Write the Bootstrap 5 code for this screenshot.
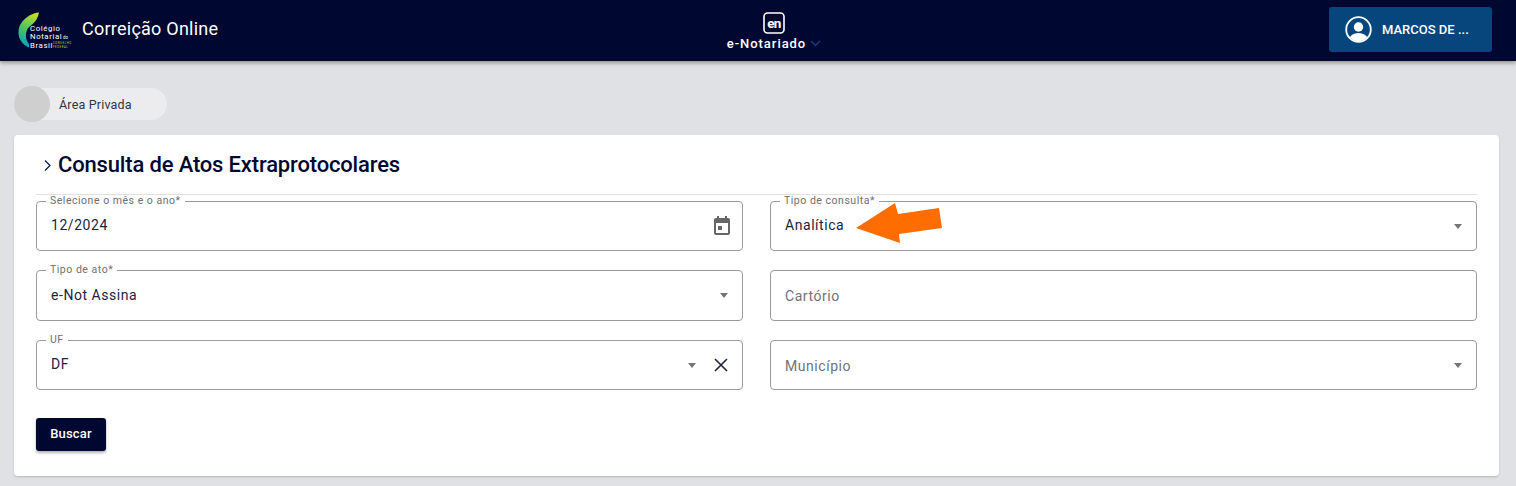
<!DOCTYPE html>
<html lang="pt-BR">
<head>
<meta charset="utf-8">
<title>Consulta de Atos Extraprotocolares</title>
<link href="https://cdn.jsdelivr.net/npm/bootstrap@5.3.0/dist/css/bootstrap.min.css" rel="stylesheet">
<style>
html,body{height:486px;overflow:hidden}
body{background:#e0e1e5;font-family:Roboto,"Liberation Sans",sans-serif;color:#000831}
.topbar{height:61px;background:#000831;box-shadow:0 2px 4px rgba(0,0,0,.35);padding:0 24px 0 18px;position:relative;z-index:2}
.topside{flex:1 1 0;min-width:0}
.logo-mark{width:56px;height:40px;display:block}
.app-name{font-size:18px;color:#fff;margin-left:8px;letter-spacing:.24px;margin-top:-4px}
.center-brand{color:#fff;margin-left:38px;margin-top:2px}
.brand-name{font-size:13px;font-weight:500;letter-spacing:.95px;line-height:16px;margin-top:2px}
.user-btn{width:163px;height:45px;background:#07457d;border-radius:3px;padding-left:16px;color:#fff;font-size:13px;font-weight:500;gap:10px;margin-bottom:2px}
.main-area{padding:25px 17px 0 14px}
.crumb-pill{width:153px;height:32px;background:#ececee;border-radius:16px;margin-top:2px;font-size:12.5px;letter-spacing:.18px;color:#30343f;position:relative;padding:2px 0 0 45px;display:flex;align-items:center;margin-bottom:15px}
.crumb-dot{position:absolute;left:0;top:-2px;width:36px;height:36px;border-radius:50%;background:#cfcfcf}
.form-panel{background:#fff;border-radius:4px;height:341px;padding:0 22px;box-shadow:0 1px 2px rgba(0,0,0,.18)}
.panel-head{height:60px;border-bottom:1px solid #e0e0e0;padding-top:16px;gap:5px;margin-bottom:6px}
.panel-title{font-size:22px;font-weight:500;line-height:28px;color:#000831;margin:0;letter-spacing:-.16px}
.form-cols{display:grid;grid-template-columns:707px 707px;column-gap:27px}
.outlined{position:relative;border:1px solid #9a9a9a;border-radius:4px;padding:0 14px;display:flex;align-items:center;font-size:14px;letter-spacing:.55px;color:#1c2340;height:50px;margin-bottom:19px}
.outlined.tall{height:51px}
.float-tag{position:absolute;left:9px;top:-7px;background:#fff;padding:0 4px;font-size:10.5px;line-height:12px;color:#6f6f6f;letter-spacing:.52px}
.ghost{color:#6f7280}
.caret-down{width:0;height:0;border-left:4.5px solid transparent;border-right:4.5px solid transparent;border-top:5px solid #757575;display:block}
.field-value{flex:1}
.nudge-up{padding-bottom:2px}
.nudge-down{padding-top:2px}
.search-btn{background:#000831;color:#fff;width:70px;height:33px;border:0;border-radius:3px;font-size:13px;font-weight:500;padding:0 0 2px;box-shadow:0 2px 3px rgba(0,0,0,.3);margin-top:9px;letter-spacing:.2px}
.search-btn:hover{background:#000831;color:#fff}
.arrow-over{position:absolute;left:85px;top:0;width:90px;height:42px}
.cal-glyph{margin-right:-3px}
.uf-caret{margin-right:18px}
</style>
</head>
<body>
<header class="topbar d-flex align-items-center">
  <div class="topside d-flex align-items-center">
    <svg class="logo-mark" viewBox="0 0 56 40" aria-label="Colégio Notarial do Brasil">
      <defs><linearGradient id="lg" x1=".4" y1="1" x2=".7" y2="0"><stop offset="0" stop-color="#0b9fc0"/><stop offset=".4" stop-color="#3fbf6a"/><stop offset="1" stop-color="#c6dc2c"/></linearGradient></defs>
      <path d="M21 1.500C14 2 8 6 4 11C0 16-1 24 3 30C5 33 8 35.500 11 36.500L11 33C8 30 7 24 9 19C11 14 19 13 21 1.500Z" fill="url(#lg)"/>
      <text x="12" y="19.500" font-size="7.800" letter-spacing=".6" fill="#fff" font-family="Roboto,sans-serif">Colégio</text>
      <text x="12" y="28" font-size="7.800" letter-spacing=".6" fill="#fff" font-family="Roboto,sans-serif">Notarial</text>
      <text x="45" y="28" font-size="4.500" fill="#fff" font-family="Roboto,sans-serif">do</text>
      <text x="12" y="36.500" font-size="7.800" letter-spacing=".6" fill="#fff" font-family="Roboto,sans-serif">Brasil</text>
      <text x="35" y="33" font-size="2.700" fill="#c6dc2c" font-family="Roboto,sans-serif" letter-spacing=".6">CONSELHO</text>
      <text x="35" y="36.500" font-size="2.700" fill="#c6dc2c" font-family="Roboto,sans-serif" letter-spacing=".6">FEDERAL</text>
    </svg>
    <span class="app-name">Correição Online</span>
  </div>
  <div class="center-brand d-flex flex-column align-items-center">
    <svg width="22" height="22" viewBox="0 0 22 22"><rect x="1" y="1" width="20" height="20" rx="3.500" fill="none" stroke="#fff" stroke-width="1.600"/><text x="11" y="15.500" text-anchor="middle" font-size="13.500" font-weight="700" fill="#fff" font-family="Roboto,sans-serif" letter-spacing="-.6">en</text></svg>
    <div class="brand-name d-flex align-items-center gap-1">e-Notariado
      <svg width="11" height="7" viewBox="0 0 11 7"><path d="M1 1l4.500 4.500L10 1" fill="none" stroke="#07457d" stroke-width="1.400"/></svg>
    </div>
  </div>
  <div class="topside d-flex justify-content-end">
    <div class="user-btn d-flex align-items-center">
      <svg width="27" height="27" viewBox="0 0 27 27"><defs><clipPath id="uc"><circle cx="13.500" cy="13.500" r="11.500"/></clipPath></defs><circle cx="13.500" cy="13.500" r="12.300" fill="none" stroke="#fff" stroke-width="1.800"/><circle cx="13.500" cy="11" r="4.700" fill="#fff"/><ellipse cx="13.500" cy="23" rx="9" ry="6" fill="#fff" clip-path="url(#uc)"/></svg>
      <span>MARCOS DE ...</span>
    </div>
  </div>
</header>
<main class="main-area">
  <div class="crumb-pill"><span class="crumb-dot"></span>Área Privada</div>
  <section class="form-panel">
    <div class="panel-head d-flex align-items-start">
      <svg class="mt-2 ms-2" width="9" height="12" viewBox="0 0 9 12"><path d="M1 1.500L6 6.500 1 11.500" fill="none" stroke="#07224f" stroke-width="1.300"/></svg>
      <h1 class="panel-title">Consulta de Atos Extraprotocolares</h1>
    </div>
    <div class="form-cols">
      <div class="outlined"><span class="float-tag">Selecione o mês e o ano*</span><span class="field-value nudge-up">12/2024</span>
        <svg class="cal-glyph" width="18" height="20" viewBox="0 0 18 20"><path d="M4 0v2H3a2 2 0 0 0-2 2v13a2 2 0 0 0 2 2h12a2 2 0 0 0 2-2V4a2 2 0 0 0-2-2h-1V0h-2v2H6V0zM3 7h12v10H3zm2 3v4h4v-4z" fill="#666" fill-rule="evenodd"/></svg>
      </div>
      <div class="outlined"><span class="float-tag">Tipo de consulta*</span><span class="field-value nudge-up">Analítica</span><span class="caret-down"></span>
        <svg class="arrow-over" viewBox="0 0 90 42"><path d="M0 26L39 1l3 11 41-6 3 20-43 6 1 9z" fill="#ff6d00"/></svg>
      </div>
      <div class="outlined tall"><span class="float-tag">Tipo de ato*</span><span class="field-value">e-Not Assina</span><span class="caret-down"></span></div>
      <div class="outlined tall"><span class="field-value ghost nudge-down">Cartório</span></div>
      <div class="outlined"><span class="float-tag">UF</span><span class="field-value nudge-up">DF</span><span class="caret-down uf-caret"></span>
        <svg width="14" height="14" viewBox="0 0 14 14"><path d="M1 1l12 12M13 1L1 13" stroke="#1c2340" stroke-width="1.600"/></svg>
      </div>
      <div class="outlined"><span class="field-value ghost nudge-down">Município</span><span class="caret-down"></span></div>
    </div>
    <button class="btn search-btn" type="button">Buscar</button>
  </section>
</main>
<script src="https://cdn.jsdelivr.net/npm/bootstrap@5.3.0/dist/js/bootstrap.bundle.min.js"></script>
</body>
</html>
